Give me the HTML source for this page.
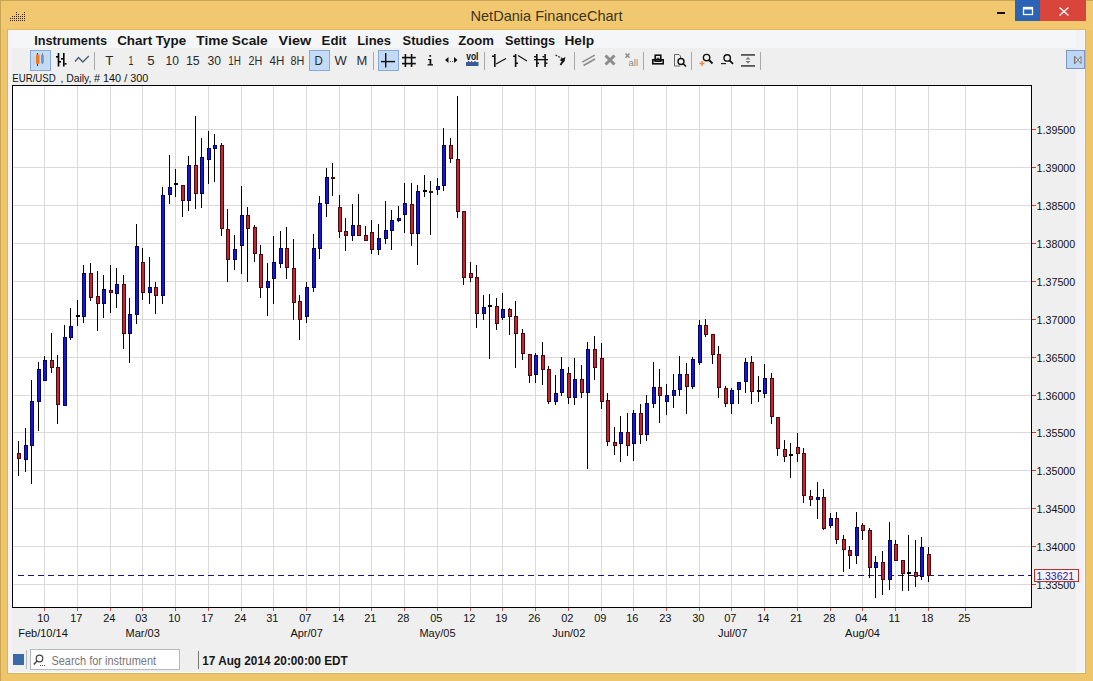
<!DOCTYPE html>
<html><head><meta charset="utf-8"><style>
html,body{margin:0;padding:0}
body{width:1093px;height:681px;overflow:hidden;position:relative;background:#efc56b;font-family:"Liberation Sans",sans-serif}
.a{position:absolute}
.menu span{position:absolute;top:3px;font-weight:bold;font-size:13px;color:#111}
.tb{position:absolute;top:0;font-size:13px;color:#222}
.pl{font-family:"Liberation Sans",sans-serif;font-size:11px;fill:#111}
.dl{font-family:"Liberation Sans",sans-serif;font-size:11px;fill:#111}
</style></head><body>
<div class="a" style="left:0;top:0;width:1093px;height:30px;background:#f1c86f"></div>
<div class="a" style="left:0;top:0;width:1px;height:681px;background:#c9a452"></div>
<div class="a" style="left:0;top:0;width:1093px;height:1px;background:#c9a452"></div>
<div class="a" style="left:8px;top:30px;width:1077px;height:643px;background:#efefef"></div>
<div class="a" style="left:8px;top:30px;width:1077px;height:18px;background:#f5f6f8"></div>
<svg class="a" style="left:0;top:0" width="1093" height="681">
<rect x="7" y="29" width="1" height="644" fill="#d9b35a"/>
<rect x="1085" y="29" width="1" height="644" fill="#d9b35a"/>
<rect x="7" y="673" width="1079" height="1" fill="#d9b35a"/>
<rect x="8" y="30" width="4" height="643" fill="#f5f3f7"/>
<rect x="1076" y="30" width="9" height="643" fill="#f3f2f6"/>
<rect x="1084" y="30" width="1" height="643" fill="#fbfbfb"/>
<rect x="8" y="672" width="1077" height="1" fill="#fafafa"/>
<rect x="12" y="85" width="1020" height="523" fill="#ffffff"/>
<rect x="13" y="129" width="1018" height="1" fill="#dadada"/>
<rect x="13" y="167" width="1018" height="1" fill="#dadada"/>
<rect x="13" y="205" width="1018" height="1" fill="#dadada"/>
<rect x="13" y="243" width="1018" height="1" fill="#dadada"/>
<rect x="13" y="281" width="1018" height="1" fill="#dadada"/>
<rect x="13" y="319" width="1018" height="1" fill="#dadada"/>
<rect x="13" y="357" width="1018" height="1" fill="#dadada"/>
<rect x="13" y="395" width="1018" height="1" fill="#dadada"/>
<rect x="13" y="432" width="1018" height="1" fill="#dadada"/>
<rect x="13" y="470" width="1018" height="1" fill="#dadada"/>
<rect x="13" y="508" width="1018" height="1" fill="#dadada"/>
<rect x="13" y="546" width="1018" height="1" fill="#dadada"/>
<rect x="13" y="584" width="1018" height="1" fill="#dadada"/>
<rect x="44" y="86" width="1" height="521" fill="#dadada"/>
<rect x="77" y="86" width="1" height="521" fill="#dadada"/>
<rect x="110" y="86" width="1" height="521" fill="#dadada"/>
<rect x="142" y="86" width="1" height="521" fill="#dadada"/>
<rect x="175" y="86" width="1" height="521" fill="#dadada"/>
<rect x="208" y="86" width="1" height="521" fill="#dadada"/>
<rect x="241" y="86" width="1" height="521" fill="#dadada"/>
<rect x="273" y="86" width="1" height="521" fill="#dadada"/>
<rect x="306" y="86" width="1" height="521" fill="#dadada"/>
<rect x="339" y="86" width="1" height="521" fill="#dadada"/>
<rect x="371" y="86" width="1" height="521" fill="#dadada"/>
<rect x="404" y="86" width="1" height="521" fill="#dadada"/>
<rect x="437" y="86" width="1" height="521" fill="#dadada"/>
<rect x="470" y="86" width="1" height="521" fill="#dadada"/>
<rect x="502" y="86" width="1" height="521" fill="#dadada"/>
<rect x="535" y="86" width="1" height="521" fill="#dadada"/>
<rect x="568" y="86" width="1" height="521" fill="#dadada"/>
<rect x="601" y="86" width="1" height="521" fill="#dadada"/>
<rect x="633" y="86" width="1" height="521" fill="#dadada"/>
<rect x="666" y="86" width="1" height="521" fill="#dadada"/>
<rect x="699" y="86" width="1" height="521" fill="#dadada"/>
<rect x="731" y="86" width="1" height="521" fill="#dadada"/>
<rect x="764" y="86" width="1" height="521" fill="#dadada"/>
<rect x="797" y="86" width="1" height="521" fill="#dadada"/>
<rect x="830" y="86" width="1" height="521" fill="#dadada"/>
<rect x="862" y="86" width="1" height="521" fill="#dadada"/>
<rect x="895" y="86" width="1" height="521" fill="#dadada"/>
<rect x="928" y="86" width="1" height="521" fill="#dadada"/>
<rect x="965" y="86" width="1" height="521" fill="#dadada"/>
<line x1="18" y1="575.5" x2="1031" y2="575.5" stroke="#16167c" stroke-width="1" stroke-dasharray="6 4" shape-rendering="crispEdges"/>
<rect x="18" y="441" width="1" height="35" fill="#000"/>
<rect x="17" y="453" width="4" height="6" fill="#4a0a0e"/>
<rect x="18" y="454" width="2" height="4" fill="#bd2834"/>
<rect x="25" y="428" width="1" height="44" fill="#000"/>
<rect x="24" y="445" width="4" height="15" fill="#04045a"/>
<rect x="25" y="446" width="2" height="13" fill="#1616d4"/>
<rect x="31" y="380" width="1" height="104" fill="#000"/>
<rect x="30" y="401" width="4" height="45" fill="#04045a"/>
<rect x="31" y="402" width="2" height="43" fill="#1616d4"/>
<rect x="38" y="362" width="1" height="69" fill="#000"/>
<rect x="37" y="369" width="4" height="33" fill="#04045a"/>
<rect x="38" y="370" width="2" height="31" fill="#1616d4"/>
<rect x="44" y="356" width="1" height="25" fill="#000"/>
<rect x="43" y="360" width="4" height="21" fill="#04045a"/>
<rect x="44" y="361" width="2" height="19" fill="#1616d4"/>
<rect x="51" y="333" width="1" height="40" fill="#000"/>
<rect x="50" y="360" width="4" height="8" fill="#4a0a0e"/>
<rect x="51" y="361" width="2" height="6" fill="#bd2834"/>
<rect x="57" y="355" width="1" height="69" fill="#000"/>
<rect x="56" y="367" width="4" height="38" fill="#4a0a0e"/>
<rect x="57" y="368" width="2" height="36" fill="#bd2834"/>
<rect x="64" y="325" width="1" height="81" fill="#000"/>
<rect x="63" y="337" width="4" height="69" fill="#04045a"/>
<rect x="64" y="338" width="2" height="67" fill="#1616d4"/>
<rect x="70" y="308" width="1" height="32" fill="#000"/>
<rect x="69" y="326" width="4" height="12" fill="#04045a"/>
<rect x="70" y="327" width="2" height="10" fill="#1616d4"/>
<rect x="77" y="300" width="1" height="26" fill="#000"/>
<rect x="76" y="315" width="4" height="2" fill="#000"/>
<rect x="83" y="265" width="1" height="58" fill="#000"/>
<rect x="82" y="273" width="4" height="44" fill="#04045a"/>
<rect x="83" y="274" width="2" height="42" fill="#1616d4"/>
<rect x="90" y="263" width="1" height="38" fill="#000"/>
<rect x="89" y="273" width="4" height="25" fill="#4a0a0e"/>
<rect x="90" y="274" width="2" height="23" fill="#bd2834"/>
<rect x="97" y="271" width="1" height="60" fill="#000"/>
<rect x="96" y="296" width="4" height="8" fill="#4a0a0e"/>
<rect x="97" y="297" width="2" height="6" fill="#bd2834"/>
<rect x="103" y="275" width="1" height="43" fill="#000"/>
<rect x="102" y="289" width="4" height="15" fill="#04045a"/>
<rect x="103" y="290" width="2" height="13" fill="#1616d4"/>
<rect x="110" y="265" width="1" height="48" fill="#000"/>
<rect x="109" y="290" width="4" height="3" fill="#4a0a0e"/>
<rect x="110" y="291" width="2" height="1" fill="#bd2834"/>
<rect x="116" y="268" width="1" height="40" fill="#000"/>
<rect x="115" y="284" width="4" height="10" fill="#04045a"/>
<rect x="116" y="285" width="2" height="8" fill="#1616d4"/>
<rect x="123" y="275" width="1" height="74" fill="#000"/>
<rect x="122" y="284" width="4" height="50" fill="#4a0a0e"/>
<rect x="123" y="285" width="2" height="48" fill="#bd2834"/>
<rect x="129" y="298" width="1" height="65" fill="#000"/>
<rect x="128" y="314" width="4" height="20" fill="#04045a"/>
<rect x="129" y="315" width="2" height="18" fill="#1616d4"/>
<rect x="136" y="224" width="1" height="100" fill="#000"/>
<rect x="135" y="246" width="4" height="69" fill="#04045a"/>
<rect x="136" y="247" width="2" height="67" fill="#1616d4"/>
<rect x="142" y="248" width="1" height="52" fill="#000"/>
<rect x="141" y="262" width="4" height="31" fill="#4a0a0e"/>
<rect x="142" y="263" width="2" height="29" fill="#bd2834"/>
<rect x="149" y="257" width="1" height="47" fill="#000"/>
<rect x="148" y="287" width="4" height="6" fill="#04045a"/>
<rect x="149" y="288" width="2" height="4" fill="#1616d4"/>
<rect x="155" y="282" width="1" height="32" fill="#000"/>
<rect x="154" y="287" width="4" height="9" fill="#4a0a0e"/>
<rect x="155" y="288" width="2" height="7" fill="#bd2834"/>
<rect x="162" y="187" width="1" height="117" fill="#000"/>
<rect x="161" y="195" width="4" height="101" fill="#04045a"/>
<rect x="162" y="196" width="2" height="99" fill="#1616d4"/>
<rect x="169" y="155" width="1" height="49" fill="#000"/>
<rect x="168" y="187" width="4" height="8" fill="#04045a"/>
<rect x="169" y="188" width="2" height="6" fill="#1616d4"/>
<rect x="175" y="169" width="1" height="28" fill="#000"/>
<rect x="174" y="183" width="4" height="2" fill="#000"/>
<rect x="182" y="185" width="1" height="32" fill="#000"/>
<rect x="181" y="185" width="4" height="16" fill="#4a0a0e"/>
<rect x="182" y="186" width="2" height="14" fill="#bd2834"/>
<rect x="188" y="156" width="1" height="55" fill="#000"/>
<rect x="187" y="165" width="4" height="36" fill="#04045a"/>
<rect x="188" y="166" width="2" height="34" fill="#1616d4"/>
<rect x="195" y="116" width="1" height="93" fill="#000"/>
<rect x="194" y="165" width="4" height="29" fill="#4a0a0e"/>
<rect x="195" y="166" width="2" height="27" fill="#bd2834"/>
<rect x="201" y="138" width="1" height="70" fill="#000"/>
<rect x="200" y="157" width="4" height="37" fill="#04045a"/>
<rect x="201" y="158" width="2" height="35" fill="#1616d4"/>
<rect x="208" y="131" width="1" height="53" fill="#000"/>
<rect x="207" y="148" width="4" height="12" fill="#04045a"/>
<rect x="208" y="149" width="2" height="10" fill="#1616d4"/>
<rect x="214" y="134" width="1" height="48" fill="#000"/>
<rect x="213" y="145" width="4" height="4" fill="#04045a"/>
<rect x="214" y="146" width="2" height="2" fill="#1616d4"/>
<rect x="221" y="143" width="1" height="93" fill="#000"/>
<rect x="220" y="145" width="4" height="84" fill="#4a0a0e"/>
<rect x="221" y="146" width="2" height="82" fill="#bd2834"/>
<rect x="227" y="209" width="1" height="73" fill="#000"/>
<rect x="226" y="229" width="4" height="31" fill="#4a0a0e"/>
<rect x="227" y="230" width="2" height="29" fill="#bd2834"/>
<rect x="234" y="235" width="1" height="35" fill="#000"/>
<rect x="233" y="249" width="4" height="11" fill="#04045a"/>
<rect x="234" y="250" width="2" height="9" fill="#1616d4"/>
<rect x="241" y="186" width="1" height="88" fill="#000"/>
<rect x="240" y="215" width="4" height="31" fill="#04045a"/>
<rect x="241" y="216" width="2" height="29" fill="#1616d4"/>
<rect x="247" y="207" width="1" height="75" fill="#000"/>
<rect x="246" y="215" width="4" height="14" fill="#4a0a0e"/>
<rect x="247" y="216" width="2" height="12" fill="#bd2834"/>
<rect x="254" y="225" width="1" height="37" fill="#000"/>
<rect x="253" y="227" width="4" height="27" fill="#4a0a0e"/>
<rect x="254" y="228" width="2" height="25" fill="#bd2834"/>
<rect x="260" y="245" width="1" height="53" fill="#000"/>
<rect x="259" y="254" width="4" height="34" fill="#4a0a0e"/>
<rect x="260" y="255" width="2" height="32" fill="#bd2834"/>
<rect x="267" y="263" width="1" height="53" fill="#000"/>
<rect x="266" y="281" width="4" height="7" fill="#04045a"/>
<rect x="267" y="282" width="2" height="5" fill="#1616d4"/>
<rect x="273" y="236" width="1" height="68" fill="#000"/>
<rect x="272" y="262" width="4" height="17" fill="#04045a"/>
<rect x="273" y="263" width="2" height="15" fill="#1616d4"/>
<rect x="280" y="231" width="1" height="37" fill="#000"/>
<rect x="279" y="248" width="4" height="16" fill="#04045a"/>
<rect x="280" y="249" width="2" height="14" fill="#1616d4"/>
<rect x="286" y="227" width="1" height="52" fill="#000"/>
<rect x="285" y="248" width="4" height="20" fill="#4a0a0e"/>
<rect x="286" y="249" width="2" height="18" fill="#bd2834"/>
<rect x="293" y="239" width="1" height="81" fill="#000"/>
<rect x="292" y="268" width="4" height="35" fill="#4a0a0e"/>
<rect x="293" y="269" width="2" height="33" fill="#bd2834"/>
<rect x="299" y="295" width="1" height="45" fill="#000"/>
<rect x="298" y="301" width="4" height="19" fill="#4a0a0e"/>
<rect x="299" y="302" width="2" height="17" fill="#bd2834"/>
<rect x="306" y="282" width="1" height="41" fill="#000"/>
<rect x="305" y="287" width="4" height="30" fill="#04045a"/>
<rect x="306" y="288" width="2" height="28" fill="#1616d4"/>
<rect x="313" y="234" width="1" height="58" fill="#000"/>
<rect x="312" y="248" width="4" height="40" fill="#04045a"/>
<rect x="313" y="249" width="2" height="38" fill="#1616d4"/>
<rect x="319" y="196" width="1" height="63" fill="#000"/>
<rect x="318" y="203" width="4" height="46" fill="#04045a"/>
<rect x="319" y="204" width="2" height="44" fill="#1616d4"/>
<rect x="326" y="168" width="1" height="49" fill="#000"/>
<rect x="325" y="177" width="4" height="27" fill="#04045a"/>
<rect x="326" y="178" width="2" height="25" fill="#1616d4"/>
<rect x="332" y="163" width="1" height="33" fill="#000"/>
<rect x="331" y="177" width="4" height="2" fill="#4a0a0e"/>
<rect x="339" y="195" width="1" height="43" fill="#000"/>
<rect x="338" y="207" width="4" height="25" fill="#4a0a0e"/>
<rect x="339" y="208" width="2" height="23" fill="#bd2834"/>
<rect x="345" y="218" width="1" height="33" fill="#000"/>
<rect x="344" y="231" width="4" height="5" fill="#4a0a0e"/>
<rect x="345" y="232" width="2" height="3" fill="#bd2834"/>
<rect x="352" y="204" width="1" height="37" fill="#000"/>
<rect x="351" y="225" width="4" height="11" fill="#04045a"/>
<rect x="352" y="226" width="2" height="9" fill="#1616d4"/>
<rect x="358" y="194" width="1" height="42" fill="#000"/>
<rect x="357" y="225" width="4" height="11" fill="#4a0a0e"/>
<rect x="358" y="226" width="2" height="9" fill="#bd2834"/>
<rect x="365" y="226" width="1" height="15" fill="#000"/>
<rect x="364" y="235" width="4" height="6" fill="#4a0a0e"/>
<rect x="365" y="236" width="2" height="4" fill="#bd2834"/>
<rect x="371" y="220" width="1" height="34" fill="#000"/>
<rect x="370" y="232" width="4" height="18" fill="#4a0a0e"/>
<rect x="371" y="233" width="2" height="16" fill="#bd2834"/>
<rect x="378" y="224" width="1" height="31" fill="#000"/>
<rect x="377" y="238" width="4" height="12" fill="#04045a"/>
<rect x="378" y="239" width="2" height="10" fill="#1616d4"/>
<rect x="385" y="201" width="1" height="43" fill="#000"/>
<rect x="384" y="230" width="4" height="9" fill="#04045a"/>
<rect x="385" y="231" width="2" height="7" fill="#1616d4"/>
<rect x="391" y="210" width="1" height="40" fill="#000"/>
<rect x="390" y="220" width="4" height="11" fill="#04045a"/>
<rect x="391" y="221" width="2" height="9" fill="#1616d4"/>
<rect x="398" y="206" width="1" height="16" fill="#000"/>
<rect x="397" y="218" width="4" height="3" fill="#04045a"/>
<rect x="398" y="219" width="2" height="1" fill="#1616d4"/>
<rect x="404" y="183" width="1" height="50" fill="#000"/>
<rect x="403" y="203" width="4" height="12" fill="#04045a"/>
<rect x="404" y="204" width="2" height="10" fill="#1616d4"/>
<rect x="411" y="183" width="1" height="63" fill="#000"/>
<rect x="410" y="204" width="4" height="30" fill="#4a0a0e"/>
<rect x="411" y="205" width="2" height="28" fill="#bd2834"/>
<rect x="417" y="185" width="1" height="80" fill="#000"/>
<rect x="416" y="191" width="4" height="43" fill="#04045a"/>
<rect x="417" y="192" width="2" height="41" fill="#1616d4"/>
<rect x="424" y="175" width="1" height="22" fill="#000"/>
<rect x="423" y="190" width="4" height="2" fill="#000"/>
<rect x="430" y="181" width="1" height="54" fill="#000"/>
<rect x="429" y="191" width="4" height="2" fill="#4a0a0e"/>
<rect x="437" y="178" width="1" height="17" fill="#000"/>
<rect x="436" y="186" width="4" height="4" fill="#04045a"/>
<rect x="437" y="187" width="2" height="2" fill="#1616d4"/>
<rect x="443" y="128" width="1" height="63" fill="#000"/>
<rect x="442" y="145" width="4" height="41" fill="#04045a"/>
<rect x="443" y="146" width="2" height="39" fill="#1616d4"/>
<rect x="450" y="138" width="1" height="25" fill="#000"/>
<rect x="449" y="145" width="4" height="14" fill="#4a0a0e"/>
<rect x="450" y="146" width="2" height="12" fill="#bd2834"/>
<rect x="457" y="96" width="1" height="122" fill="#000"/>
<rect x="456" y="159" width="4" height="53" fill="#4a0a0e"/>
<rect x="457" y="160" width="2" height="51" fill="#bd2834"/>
<rect x="463" y="211" width="1" height="74" fill="#000"/>
<rect x="462" y="211" width="4" height="67" fill="#4a0a0e"/>
<rect x="463" y="212" width="2" height="65" fill="#bd2834"/>
<rect x="470" y="262" width="1" height="20" fill="#000"/>
<rect x="469" y="273" width="4" height="5" fill="#4a0a0e"/>
<rect x="470" y="274" width="2" height="3" fill="#bd2834"/>
<rect x="476" y="265" width="1" height="63" fill="#000"/>
<rect x="475" y="277" width="4" height="37" fill="#4a0a0e"/>
<rect x="476" y="278" width="2" height="35" fill="#bd2834"/>
<rect x="483" y="295" width="1" height="25" fill="#000"/>
<rect x="482" y="307" width="4" height="7" fill="#04045a"/>
<rect x="483" y="308" width="2" height="5" fill="#1616d4"/>
<rect x="489" y="294" width="1" height="65" fill="#000"/>
<rect x="488" y="305" width="4" height="2" fill="#000"/>
<rect x="496" y="298" width="1" height="32" fill="#000"/>
<rect x="495" y="306" width="4" height="18" fill="#4a0a0e"/>
<rect x="496" y="307" width="2" height="16" fill="#bd2834"/>
<rect x="502" y="293" width="1" height="27" fill="#000"/>
<rect x="501" y="309" width="4" height="9" fill="#04045a"/>
<rect x="502" y="310" width="2" height="7" fill="#1616d4"/>
<rect x="509" y="308" width="1" height="27" fill="#000"/>
<rect x="508" y="309" width="4" height="8" fill="#4a0a0e"/>
<rect x="509" y="310" width="2" height="6" fill="#bd2834"/>
<rect x="515" y="301" width="1" height="67" fill="#000"/>
<rect x="514" y="316" width="4" height="18" fill="#4a0a0e"/>
<rect x="515" y="317" width="2" height="16" fill="#bd2834"/>
<rect x="522" y="329" width="1" height="31" fill="#000"/>
<rect x="521" y="333" width="4" height="21" fill="#4a0a0e"/>
<rect x="522" y="334" width="2" height="19" fill="#bd2834"/>
<rect x="529" y="354" width="1" height="29" fill="#000"/>
<rect x="528" y="354" width="4" height="22" fill="#4a0a0e"/>
<rect x="529" y="355" width="2" height="20" fill="#bd2834"/>
<rect x="535" y="353" width="1" height="30" fill="#000"/>
<rect x="534" y="355" width="4" height="20" fill="#04045a"/>
<rect x="535" y="356" width="2" height="18" fill="#1616d4"/>
<rect x="542" y="342" width="1" height="43" fill="#000"/>
<rect x="541" y="355" width="4" height="15" fill="#4a0a0e"/>
<rect x="542" y="356" width="2" height="13" fill="#bd2834"/>
<rect x="548" y="366" width="1" height="38" fill="#000"/>
<rect x="547" y="369" width="4" height="33" fill="#4a0a0e"/>
<rect x="548" y="370" width="2" height="31" fill="#bd2834"/>
<rect x="555" y="375" width="1" height="30" fill="#000"/>
<rect x="554" y="393" width="4" height="9" fill="#04045a"/>
<rect x="555" y="394" width="2" height="7" fill="#1616d4"/>
<rect x="561" y="357" width="1" height="39" fill="#000"/>
<rect x="560" y="369" width="4" height="24" fill="#04045a"/>
<rect x="561" y="370" width="2" height="22" fill="#1616d4"/>
<rect x="568" y="367" width="1" height="37" fill="#000"/>
<rect x="567" y="373" width="4" height="25" fill="#4a0a0e"/>
<rect x="568" y="374" width="2" height="23" fill="#bd2834"/>
<rect x="574" y="358" width="1" height="47" fill="#000"/>
<rect x="573" y="379" width="4" height="19" fill="#04045a"/>
<rect x="574" y="380" width="2" height="17" fill="#1616d4"/>
<rect x="581" y="365" width="1" height="33" fill="#000"/>
<rect x="580" y="379" width="4" height="14" fill="#4a0a0e"/>
<rect x="581" y="380" width="2" height="12" fill="#bd2834"/>
<rect x="587" y="342" width="1" height="127" fill="#000"/>
<rect x="586" y="349" width="4" height="44" fill="#04045a"/>
<rect x="587" y="350" width="2" height="42" fill="#1616d4"/>
<rect x="594" y="336" width="1" height="44" fill="#000"/>
<rect x="593" y="349" width="4" height="19" fill="#4a0a0e"/>
<rect x="594" y="350" width="2" height="17" fill="#bd2834"/>
<rect x="601" y="343" width="1" height="66" fill="#000"/>
<rect x="600" y="358" width="4" height="44" fill="#4a0a0e"/>
<rect x="601" y="359" width="2" height="42" fill="#bd2834"/>
<rect x="607" y="393" width="1" height="53" fill="#000"/>
<rect x="606" y="400" width="4" height="42" fill="#4a0a0e"/>
<rect x="607" y="401" width="2" height="40" fill="#bd2834"/>
<rect x="614" y="427" width="1" height="28" fill="#000"/>
<rect x="613" y="442" width="4" height="4" fill="#4a0a0e"/>
<rect x="614" y="443" width="2" height="2" fill="#bd2834"/>
<rect x="620" y="416" width="1" height="46" fill="#000"/>
<rect x="619" y="432" width="4" height="12" fill="#04045a"/>
<rect x="620" y="433" width="2" height="10" fill="#1616d4"/>
<rect x="627" y="413" width="1" height="43" fill="#000"/>
<rect x="626" y="432" width="4" height="14" fill="#4a0a0e"/>
<rect x="627" y="433" width="2" height="12" fill="#bd2834"/>
<rect x="633" y="410" width="1" height="51" fill="#000"/>
<rect x="632" y="413" width="4" height="31" fill="#04045a"/>
<rect x="633" y="414" width="2" height="29" fill="#1616d4"/>
<rect x="640" y="404" width="1" height="40" fill="#000"/>
<rect x="639" y="413" width="4" height="22" fill="#4a0a0e"/>
<rect x="640" y="414" width="2" height="20" fill="#bd2834"/>
<rect x="646" y="395" width="1" height="46" fill="#000"/>
<rect x="645" y="403" width="4" height="32" fill="#04045a"/>
<rect x="646" y="404" width="2" height="30" fill="#1616d4"/>
<rect x="653" y="362" width="1" height="46" fill="#000"/>
<rect x="652" y="387" width="4" height="17" fill="#04045a"/>
<rect x="653" y="388" width="2" height="15" fill="#1616d4"/>
<rect x="659" y="369" width="1" height="54" fill="#000"/>
<rect x="658" y="387" width="4" height="9" fill="#4a0a0e"/>
<rect x="659" y="388" width="2" height="7" fill="#bd2834"/>
<rect x="666" y="384" width="1" height="31" fill="#000"/>
<rect x="665" y="395" width="4" height="7" fill="#04045a"/>
<rect x="666" y="396" width="2" height="5" fill="#1616d4"/>
<rect x="673" y="374" width="1" height="34" fill="#000"/>
<rect x="672" y="390" width="4" height="6" fill="#04045a"/>
<rect x="673" y="391" width="2" height="4" fill="#1616d4"/>
<rect x="679" y="356" width="1" height="40" fill="#000"/>
<rect x="678" y="374" width="4" height="16" fill="#04045a"/>
<rect x="679" y="375" width="2" height="14" fill="#1616d4"/>
<rect x="686" y="363" width="1" height="51" fill="#000"/>
<rect x="685" y="374" width="4" height="13" fill="#4a0a0e"/>
<rect x="686" y="375" width="2" height="11" fill="#bd2834"/>
<rect x="692" y="357" width="1" height="32" fill="#000"/>
<rect x="691" y="359" width="4" height="28" fill="#04045a"/>
<rect x="692" y="360" width="2" height="26" fill="#1616d4"/>
<rect x="699" y="320" width="1" height="45" fill="#000"/>
<rect x="698" y="325" width="4" height="38" fill="#04045a"/>
<rect x="699" y="326" width="2" height="36" fill="#1616d4"/>
<rect x="705" y="319" width="1" height="18" fill="#000"/>
<rect x="704" y="325" width="4" height="10" fill="#4a0a0e"/>
<rect x="705" y="326" width="2" height="8" fill="#bd2834"/>
<rect x="712" y="334" width="1" height="30" fill="#000"/>
<rect x="711" y="334" width="4" height="21" fill="#4a0a0e"/>
<rect x="712" y="335" width="2" height="19" fill="#bd2834"/>
<rect x="718" y="346" width="1" height="52" fill="#000"/>
<rect x="717" y="354" width="4" height="34" fill="#4a0a0e"/>
<rect x="718" y="355" width="2" height="32" fill="#bd2834"/>
<rect x="725" y="386" width="1" height="21" fill="#000"/>
<rect x="724" y="388" width="4" height="16" fill="#4a0a0e"/>
<rect x="725" y="389" width="2" height="14" fill="#bd2834"/>
<rect x="731" y="388" width="1" height="26" fill="#000"/>
<rect x="730" y="390" width="4" height="14" fill="#04045a"/>
<rect x="731" y="391" width="2" height="12" fill="#1616d4"/>
<rect x="738" y="382" width="1" height="22" fill="#000"/>
<rect x="737" y="382" width="4" height="8" fill="#04045a"/>
<rect x="738" y="383" width="2" height="6" fill="#1616d4"/>
<rect x="745" y="358" width="1" height="35" fill="#000"/>
<rect x="744" y="362" width="4" height="20" fill="#04045a"/>
<rect x="745" y="363" width="2" height="18" fill="#1616d4"/>
<rect x="751" y="356" width="1" height="48" fill="#000"/>
<rect x="750" y="362" width="4" height="30" fill="#4a0a0e"/>
<rect x="751" y="363" width="2" height="28" fill="#bd2834"/>
<rect x="758" y="376" width="1" height="26" fill="#000"/>
<rect x="757" y="390" width="4" height="2" fill="#000"/>
<rect x="764" y="364" width="1" height="34" fill="#000"/>
<rect x="763" y="378" width="4" height="16" fill="#04045a"/>
<rect x="764" y="379" width="2" height="14" fill="#1616d4"/>
<rect x="771" y="373" width="1" height="51" fill="#000"/>
<rect x="770" y="378" width="4" height="39" fill="#4a0a0e"/>
<rect x="771" y="379" width="2" height="37" fill="#bd2834"/>
<rect x="777" y="417" width="1" height="39" fill="#000"/>
<rect x="776" y="417" width="4" height="32" fill="#4a0a0e"/>
<rect x="777" y="418" width="2" height="30" fill="#bd2834"/>
<rect x="784" y="440" width="1" height="22" fill="#000"/>
<rect x="783" y="449" width="4" height="8" fill="#4a0a0e"/>
<rect x="784" y="450" width="2" height="6" fill="#bd2834"/>
<rect x="790" y="443" width="1" height="35" fill="#000"/>
<rect x="789" y="454" width="4" height="2" fill="#000"/>
<rect x="797" y="433" width="1" height="29" fill="#000"/>
<rect x="796" y="447" width="4" height="7" fill="#4a0a0e"/>
<rect x="797" y="448" width="2" height="5" fill="#bd2834"/>
<rect x="803" y="448" width="1" height="55" fill="#000"/>
<rect x="802" y="453" width="4" height="43" fill="#4a0a0e"/>
<rect x="803" y="454" width="2" height="41" fill="#bd2834"/>
<rect x="810" y="490" width="1" height="16" fill="#000"/>
<rect x="809" y="496" width="4" height="4" fill="#4a0a0e"/>
<rect x="810" y="497" width="2" height="2" fill="#bd2834"/>
<rect x="817" y="482" width="1" height="37" fill="#000"/>
<rect x="816" y="497" width="4" height="3" fill="#04045a"/>
<rect x="817" y="498" width="2" height="1" fill="#1616d4"/>
<rect x="823" y="489" width="1" height="41" fill="#000"/>
<rect x="822" y="497" width="4" height="32" fill="#4a0a0e"/>
<rect x="823" y="498" width="2" height="30" fill="#bd2834"/>
<rect x="830" y="513" width="1" height="15" fill="#000"/>
<rect x="829" y="518" width="4" height="8" fill="#04045a"/>
<rect x="830" y="519" width="2" height="6" fill="#1616d4"/>
<rect x="836" y="512" width="1" height="32" fill="#000"/>
<rect x="835" y="518" width="4" height="22" fill="#4a0a0e"/>
<rect x="836" y="519" width="2" height="20" fill="#bd2834"/>
<rect x="843" y="535" width="1" height="37" fill="#000"/>
<rect x="842" y="539" width="4" height="11" fill="#4a0a0e"/>
<rect x="843" y="540" width="2" height="9" fill="#bd2834"/>
<rect x="849" y="546" width="1" height="23" fill="#000"/>
<rect x="848" y="550" width="4" height="6" fill="#4a0a0e"/>
<rect x="849" y="551" width="2" height="4" fill="#bd2834"/>
<rect x="856" y="512" width="1" height="52" fill="#000"/>
<rect x="855" y="527" width="4" height="29" fill="#04045a"/>
<rect x="856" y="528" width="2" height="27" fill="#1616d4"/>
<rect x="862" y="523" width="1" height="17" fill="#000"/>
<rect x="861" y="525" width="4" height="6" fill="#4a0a0e"/>
<rect x="862" y="526" width="2" height="4" fill="#bd2834"/>
<rect x="869" y="528" width="1" height="50" fill="#000"/>
<rect x="868" y="530" width="4" height="38" fill="#4a0a0e"/>
<rect x="869" y="531" width="2" height="36" fill="#bd2834"/>
<rect x="875" y="556" width="1" height="42" fill="#000"/>
<rect x="874" y="562" width="4" height="6" fill="#04045a"/>
<rect x="875" y="563" width="2" height="4" fill="#1616d4"/>
<rect x="882" y="551" width="1" height="44" fill="#000"/>
<rect x="881" y="562" width="4" height="18" fill="#4a0a0e"/>
<rect x="882" y="563" width="2" height="16" fill="#bd2834"/>
<rect x="889" y="522" width="1" height="68" fill="#000"/>
<rect x="888" y="540" width="4" height="40" fill="#04045a"/>
<rect x="889" y="541" width="2" height="38" fill="#1616d4"/>
<rect x="895" y="540" width="1" height="21" fill="#000"/>
<rect x="894" y="544" width="4" height="17" fill="#4a0a0e"/>
<rect x="895" y="545" width="2" height="15" fill="#bd2834"/>
<rect x="902" y="560" width="1" height="31" fill="#000"/>
<rect x="901" y="560" width="4" height="14" fill="#4a0a0e"/>
<rect x="902" y="561" width="2" height="12" fill="#bd2834"/>
<rect x="908" y="535" width="1" height="56" fill="#000"/>
<rect x="907" y="572" width="4" height="2" fill="#000"/>
<rect x="915" y="540" width="1" height="47" fill="#000"/>
<rect x="914" y="572" width="4" height="5" fill="#4a0a0e"/>
<rect x="915" y="573" width="2" height="3" fill="#bd2834"/>
<rect x="921" y="537" width="1" height="43" fill="#000"/>
<rect x="920" y="547" width="4" height="30" fill="#04045a"/>
<rect x="921" y="548" width="2" height="28" fill="#1616d4"/>
<rect x="928" y="547" width="1" height="35" fill="#000"/>
<rect x="927" y="554" width="4" height="22" fill="#4a0a0e"/>
<rect x="928" y="555" width="2" height="20" fill="#bd2834"/>
<rect x="12.5" y="85.5" width="1019" height="522" fill="none" stroke="#000" stroke-width="1"/>
<rect x="1032" y="129" width="4" height="1" fill="#c83c3c"/>
<text x="1036.6" y="133.6" class="pl" textLength="38.6" lengthAdjust="spacingAndGlyphs">1.39500</text>
<rect x="1032" y="167" width="4" height="1" fill="#c83c3c"/>
<text x="1036.6" y="171.6" class="pl" textLength="38.6" lengthAdjust="spacingAndGlyphs">1.39000</text>
<rect x="1032" y="205" width="4" height="1" fill="#c83c3c"/>
<text x="1036.6" y="209.6" class="pl" textLength="38.6" lengthAdjust="spacingAndGlyphs">1.38500</text>
<rect x="1032" y="243" width="4" height="1" fill="#c83c3c"/>
<text x="1036.6" y="247.6" class="pl" textLength="38.6" lengthAdjust="spacingAndGlyphs">1.38000</text>
<rect x="1032" y="281" width="4" height="1" fill="#c83c3c"/>
<text x="1036.6" y="285.6" class="pl" textLength="38.6" lengthAdjust="spacingAndGlyphs">1.37500</text>
<rect x="1032" y="319" width="4" height="1" fill="#c83c3c"/>
<text x="1036.6" y="323.6" class="pl" textLength="38.6" lengthAdjust="spacingAndGlyphs">1.37000</text>
<rect x="1032" y="357" width="4" height="1" fill="#c83c3c"/>
<text x="1036.6" y="361.6" class="pl" textLength="38.6" lengthAdjust="spacingAndGlyphs">1.36500</text>
<rect x="1032" y="395" width="4" height="1" fill="#c83c3c"/>
<text x="1036.6" y="399.6" class="pl" textLength="38.6" lengthAdjust="spacingAndGlyphs">1.36000</text>
<rect x="1032" y="432" width="4" height="1" fill="#c83c3c"/>
<text x="1036.6" y="436.6" class="pl" textLength="38.6" lengthAdjust="spacingAndGlyphs">1.35500</text>
<rect x="1032" y="470" width="4" height="1" fill="#c83c3c"/>
<text x="1036.6" y="474.6" class="pl" textLength="38.6" lengthAdjust="spacingAndGlyphs">1.35000</text>
<rect x="1032" y="508" width="4" height="1" fill="#c83c3c"/>
<text x="1036.6" y="512.6" class="pl" textLength="38.6" lengthAdjust="spacingAndGlyphs">1.34500</text>
<rect x="1032" y="546" width="4" height="1" fill="#c83c3c"/>
<text x="1036.6" y="550.6" class="pl" textLength="38.6" lengthAdjust="spacingAndGlyphs">1.34000</text>
<rect x="1032" y="584" width="4" height="1" fill="#c83c3c"/>
<text x="1036.6" y="588.6" class="pl" textLength="38.6" lengthAdjust="spacingAndGlyphs">1.33500</text>
<rect x="1034.5" y="569.5" width="44" height="12" fill="#f6f2f4" stroke="#b83030" stroke-width="1"/>
<text x="1036.4" y="579.8" class="pl" style="fill:#1e1e9a" textLength="37.6" lengthAdjust="spacingAndGlyphs">1.33621</text>
<rect x="44" y="608" width="1" height="3" fill="#d05050"/>
<text x="43.3" y="621.8" class="dl" text-anchor="middle">10</text>
<rect x="77" y="608" width="1" height="3" fill="#d05050"/>
<text x="76.3" y="621.8" class="dl" text-anchor="middle">17</text>
<rect x="110" y="608" width="1" height="3" fill="#d05050"/>
<text x="109.3" y="621.8" class="dl" text-anchor="middle">24</text>
<rect x="142" y="608" width="1" height="3" fill="#d05050"/>
<text x="141.3" y="621.8" class="dl" text-anchor="middle">03</text>
<rect x="175" y="608" width="1" height="3" fill="#d05050"/>
<text x="174.3" y="621.8" class="dl" text-anchor="middle">10</text>
<rect x="208" y="608" width="1" height="3" fill="#d05050"/>
<text x="207.3" y="621.8" class="dl" text-anchor="middle">17</text>
<rect x="241" y="608" width="1" height="3" fill="#d05050"/>
<text x="240.3" y="621.8" class="dl" text-anchor="middle">24</text>
<rect x="273" y="608" width="1" height="3" fill="#d05050"/>
<text x="272.3" y="621.8" class="dl" text-anchor="middle">31</text>
<rect x="306" y="608" width="1" height="3" fill="#d05050"/>
<text x="305.3" y="621.8" class="dl" text-anchor="middle">07</text>
<rect x="339" y="608" width="1" height="3" fill="#d05050"/>
<text x="338.3" y="621.8" class="dl" text-anchor="middle">14</text>
<rect x="371" y="608" width="1" height="3" fill="#d05050"/>
<text x="370.3" y="621.8" class="dl" text-anchor="middle">21</text>
<rect x="404" y="608" width="1" height="3" fill="#d05050"/>
<text x="403.3" y="621.8" class="dl" text-anchor="middle">28</text>
<rect x="437" y="608" width="1" height="3" fill="#d05050"/>
<text x="436.3" y="621.8" class="dl" text-anchor="middle">05</text>
<rect x="470" y="608" width="1" height="3" fill="#d05050"/>
<text x="469.3" y="621.8" class="dl" text-anchor="middle">12</text>
<rect x="502" y="608" width="1" height="3" fill="#d05050"/>
<text x="501.3" y="621.8" class="dl" text-anchor="middle">19</text>
<rect x="535" y="608" width="1" height="3" fill="#d05050"/>
<text x="534.3" y="621.8" class="dl" text-anchor="middle">26</text>
<rect x="568" y="608" width="1" height="3" fill="#d05050"/>
<text x="567.3" y="621.8" class="dl" text-anchor="middle">02</text>
<rect x="601" y="608" width="1" height="3" fill="#d05050"/>
<text x="600.3" y="621.8" class="dl" text-anchor="middle">09</text>
<rect x="633" y="608" width="1" height="3" fill="#d05050"/>
<text x="632.3" y="621.8" class="dl" text-anchor="middle">16</text>
<rect x="666" y="608" width="1" height="3" fill="#d05050"/>
<text x="665.3" y="621.8" class="dl" text-anchor="middle">23</text>
<rect x="699" y="608" width="1" height="3" fill="#d05050"/>
<text x="698.3" y="621.8" class="dl" text-anchor="middle">30</text>
<rect x="731" y="608" width="1" height="3" fill="#d05050"/>
<text x="730.3" y="621.8" class="dl" text-anchor="middle">07</text>
<rect x="764" y="608" width="1" height="3" fill="#d05050"/>
<text x="763.3" y="621.8" class="dl" text-anchor="middle">14</text>
<rect x="797" y="608" width="1" height="3" fill="#d05050"/>
<text x="796.3" y="621.8" class="dl" text-anchor="middle">21</text>
<rect x="830" y="608" width="1" height="3" fill="#d05050"/>
<text x="829.3" y="621.8" class="dl" text-anchor="middle">28</text>
<rect x="862" y="608" width="1" height="3" fill="#d05050"/>
<text x="861.3" y="621.8" class="dl" text-anchor="middle">04</text>
<rect x="895" y="608" width="1" height="3" fill="#d05050"/>
<text x="894.3" y="621.8" class="dl" text-anchor="middle">11</text>
<rect x="928" y="608" width="1" height="3" fill="#d05050"/>
<text x="927.3" y="621.8" class="dl" text-anchor="middle">18</text>
<rect x="965" y="608" width="1" height="3" fill="#d05050"/>
<text x="964.3" y="621.8" class="dl" text-anchor="middle">25</text>
<text x="43" y="637" class="dl" text-anchor="middle">Feb/10/14</text>
<text x="142.7" y="637" class="dl" text-anchor="middle">Mar/03</text>
<text x="306.6" y="637" class="dl" text-anchor="middle">Apr/07</text>
<text x="437.5" y="637" class="dl" text-anchor="middle">May/05</text>
<text x="568.8" y="637" class="dl" text-anchor="middle">Jun/02</text>
<text x="732.6" y="637" class="dl" text-anchor="middle">Jul/07</text>
<text x="862.5" y="637" class="dl" text-anchor="middle">Aug/04</text>
<rect x="30.5" y="50.5" width="20" height="20" fill="#c3dbf5" stroke="#86a9d6"/>
<rect x="37" y="53" width="1" height="13" fill="#4a3020"/>
<rect x="36" y="54.5" width="3.5" height="9.5" rx="1" fill="#f07a22"/>
<rect x="42" y="53.5" width="1" height="10" fill="#4a6a90"/>
<rect x="41" y="54.5" width="2.8" height="9" rx="1.2" fill="#6a98c8"/>
<rect x="33" y="56" width="1.5" height="9" fill="#d8c8c0" opacity="0.6"/>
<rect x="46" y="56" width="1.5" height="9" fill="#c8d4e0" opacity="0.6"/>
<rect x="57.7" y="53" width="1.6" height="13.5" fill="#000"/>
<rect x="56" y="56" width="2" height="1.6" fill="#000"/>
<rect x="59" y="61" width="2" height="1.6" fill="#000"/>
<rect x="63" y="53" width="1.6" height="13.5" fill="#000"/>
<rect x="61" y="58" width="2" height="1.6" fill="#000"/>
<rect x="64.5" y="63" width="2" height="1.6" fill="#000"/>
<polyline points="75,61.5 78.5,57.5 82.8,62 88.8,56" fill="none" stroke="#4a6078" stroke-width="1.4"/>
<rect x="94" y="52" width="1" height="18" fill="#a8a8a8"/>
<rect x="378.5" y="50.5" width="20" height="20" fill="#c3dbf5" stroke="#86a9d6"/>
<rect x="385" y="53" width="1.4" height="14.5" fill="#111"/>
<rect x="381" y="60.9" width="14" height="1.4" fill="#111"/>
<rect x="373" y="52" width="1" height="18" fill="#a8a8a8"/>
<rect x="404.6" y="54" width="1.6" height="13" fill="#111"/>
<rect x="410.8" y="54" width="1.6" height="13" fill="#111"/>
<rect x="402" y="56.8" width="13.8" height="1.6" fill="#111"/>
<rect x="402" y="62.8" width="13.8" height="1.6" fill="#111"/>
<rect x="429.3" y="55" width="1.8" height="1.8" fill="#222"/>
<rect x="429.5" y="59" width="1.8" height="6" fill="#111"/>
<rect x="428" y="59" width="2" height="1.1" fill="#111"/>
<rect x="427.6" y="64.2" width="5.4" height="1.3" fill="#111"/>
<polygon points="445,60 448.5,57 448.5,63" fill="#111"/>
<polygon points="457.5,60 454,57 454,63" fill="#111"/>
<rect x="450" y="61" width="1" height="1" fill="#555"/><rect x="452" y="61" width="1" height="1" fill="#555"/>
<text x="466.2" y="60.4" font-family="Liberation Sans" font-size="10" font-weight="bold" fill="#111" textLength="12.2" lengthAdjust="spacingAndGlyphs">vol</text>
<rect x="466" y="62" width="12.5" height="4" fill="#3b5a98"/>
<rect x="468" y="61" width="1.2" height="1.5" fill="#3b5a98"/><rect x="471" y="61" width="1.2" height="1.5" fill="#3b5a98"/><rect x="474.5" y="61" width="1.2" height="1.5" fill="#3b5a98"/>
<rect x="484" y="52" width="1" height="18" fill="#a8a8a8"/>
<rect x="494" y="54" width="1.6" height="13" fill="#111"/>
<rect x="492" y="55.5" width="2" height="1.5" fill="#111"/>
<line x1="496" y1="64" x2="506" y2="58.5" stroke="#111" stroke-width="1.2"/>
<rect x="514.8" y="54" width="1.6" height="13" fill="#111"/>
<rect x="513" y="55.5" width="2" height="1.5" fill="#111"/>
<rect x="516" y="62.5" width="2" height="1.5" fill="#111"/>
<line x1="518" y1="55.5" x2="527" y2="61" stroke="#111" stroke-width="1.1"/>
<rect x="536" y="54" width="1.6" height="13" fill="#111"/>
<rect x="544.3" y="54" width="1.6" height="13" fill="#111"/>
<rect x="534" y="59" width="14" height="1.3" fill="#111"/>
<rect x="534" y="56" width="2" height="1.4" fill="#111"/><rect x="542.5" y="56" width="2" height="1.4" fill="#111"/>
<rect x="537" y="62.5" width="2" height="1.4" fill="#111"/><rect x="545.5" y="62.5" width="2" height="1.4" fill="#111"/>
<line x1="555.5" y1="55" x2="563" y2="59" stroke="#222" stroke-width="1.1" stroke-dasharray="2 1"/>
<line x1="560.5" y1="65" x2="564" y2="59.5" stroke="#111" stroke-width="1.8"/>
<polygon points="565.5,57 559.5,60 564,62.5" fill="#111"/>
<rect x="574" y="52" width="1" height="18" fill="#a8a8a8"/>
<line x1="582.3" y1="62.2" x2="594.8" y2="55.2" stroke="#8a8a8a" stroke-width="1.5"/>
<line x1="583.5" y1="65.5" x2="595" y2="59" stroke="#8a8a8a" stroke-width="1.5"/>
<path d="M605.5,55.5 L614.5,64.5 M614.5,55.5 L605.5,64.5" stroke="#8c8c8c" stroke-width="3"/>
<path d="M625.5,53.5 L629.5,57.8 M629.5,53.5 L625.5,57.8" stroke="#8a8a8a" stroke-width="1.4"/>
<text x="628.5" y="66" font-family="Liberation Sans" font-size="9.5" fill="#8a8a8a">all</text>
<rect x="643" y="52" width="1" height="18" fill="#a8a8a8"/>
<rect x="655.2" y="55.2" width="5.6" height="6" fill="none" stroke="#111" stroke-width="1.6"/>
<rect x="656.5" y="57.8" width="3" height="1" fill="#111"/>
<rect x="652.8" y="59.8" width="10.4" height="4" fill="none" stroke="#111" stroke-width="1.6"/>
<path d="M674.5,54.5 L679,54.5 L680.5,56 L680.5,58 M674.5,54.5 L674.5,66 L680,66" fill="none" stroke="#666" stroke-width="1"/>
<circle cx="681" cy="61.5" r="3" fill="none" stroke="#111" stroke-width="1.4"/>
<line x1="683" y1="63.5" x2="686" y2="66.5" stroke="#111" stroke-width="1.6"/>
<rect x="691" y="52" width="1" height="18" fill="#a8a8a8"/>
<circle cx="706.6" cy="57.6" r="3.2" fill="none" stroke="#111" stroke-width="1.4"/>
<line x1="709" y1="60" x2="712.5" y2="63.5" stroke="#111" stroke-width="1.8"/>
<path d="M699.5,63.5 L704.5,63.5 M702,61 L702,66" stroke="#f0883a" stroke-width="1.4"/>
<circle cx="727.2" cy="57.9" r="3.2" fill="none" stroke="#111" stroke-width="1.4"/>
<line x1="729.5" y1="60.3" x2="733" y2="63.8" stroke="#111" stroke-width="1.8"/>
<rect x="721" y="63" width="5" height="1.2" fill="#222"/>
<rect x="741" y="54" width="14" height="1.8" fill="#555"/>
<rect x="741" y="65" width="14" height="1.8" fill="#555"/>
<polygon points="748,57 745.5,59.5 750.5,59.5" fill="#777"/>
<polygon points="748,63.5 745.5,61 750.5,61" fill="#777"/>
<rect x="760" y="52" width="1" height="18" fill="#a8a8a8"/>
<rect x="1066.5" y="50.5" width="18" height="18" fill="#bcd6f4" stroke="#7a98c4"/>
<rect x="1074" y="56" width="1" height="8" fill="#777"/>
<path d="M1075,56.5 L1081,63.5 L1081,56.5 L1075,63.5 Z" fill="#f0f0f8" stroke="#777" stroke-width="1"/>
<text x="34.2" y="45" font-family="Liberation Sans" font-size="13" font-weight="bold" fill="#161616" textLength="72.8" lengthAdjust="spacingAndGlyphs">Instruments</text>
<text x="117.2" y="45" font-family="Liberation Sans" font-size="13" font-weight="bold" fill="#161616" textLength="68.9" lengthAdjust="spacingAndGlyphs">Chart Type</text>
<text x="196.3" y="45" font-family="Liberation Sans" font-size="13" font-weight="bold" fill="#161616" textLength="71.4" lengthAdjust="spacingAndGlyphs">Time Scale</text>
<text x="278.6" y="45" font-family="Liberation Sans" font-size="13" font-weight="bold" fill="#161616" textLength="32.5" lengthAdjust="spacingAndGlyphs">View</text>
<text x="321.6" y="45" font-family="Liberation Sans" font-size="13" font-weight="bold" fill="#161616" textLength="24.9" lengthAdjust="spacingAndGlyphs">Edit</text>
<text x="357.2" y="45" font-family="Liberation Sans" font-size="13" font-weight="bold" fill="#161616" textLength="33.8" lengthAdjust="spacingAndGlyphs">Lines</text>
<text x="402.6" y="45" font-family="Liberation Sans" font-size="13" font-weight="bold" fill="#161616" textLength="46.6" lengthAdjust="spacingAndGlyphs">Studies</text>
<text x="458.3" y="45" font-family="Liberation Sans" font-size="13" font-weight="bold" fill="#161616" textLength="35.6" lengthAdjust="spacingAndGlyphs">Zoom</text>
<text x="504.9" y="45" font-family="Liberation Sans" font-size="13" font-weight="bold" fill="#161616" textLength="50.2" lengthAdjust="spacingAndGlyphs">Settings</text>
<text x="564.5" y="45" font-family="Liberation Sans" font-size="13" font-weight="bold" fill="#161616" textLength="29.6" lengthAdjust="spacingAndGlyphs">Help</text>
<rect x="309.5" y="50.5" width="20" height="20" fill="#c3dbf5" stroke="#86a9d6"/>
<text x="105.3" y="64.6" font-family="Liberation Sans" font-size="12.5" font-weight="normal" fill="#2a2a2a" textLength="8.1" lengthAdjust="spacingAndGlyphs">T</text>
<text x="128.4" y="64.6" font-family="Liberation Sans" font-size="12.5" font-weight="normal" fill="#2a2a2a" textLength="4.9" lengthAdjust="spacingAndGlyphs">1</text>
<text x="147.3" y="64.6" font-family="Liberation Sans" font-size="12.5" font-weight="normal" fill="#2a2a2a" textLength="7.4" lengthAdjust="spacingAndGlyphs">5</text>
<text x="165.5" y="64.6" font-family="Liberation Sans" font-size="12.5" font-weight="normal" fill="#2a2a2a" textLength="13.4" lengthAdjust="spacingAndGlyphs">10</text>
<text x="186.0" y="64.6" font-family="Liberation Sans" font-size="12.5" font-weight="normal" fill="#2a2a2a" textLength="13.7" lengthAdjust="spacingAndGlyphs">15</text>
<text x="207.4" y="64.6" font-family="Liberation Sans" font-size="12.5" font-weight="normal" fill="#2a2a2a" textLength="13.5" lengthAdjust="spacingAndGlyphs">30</text>
<text x="228.2" y="64.6" font-family="Liberation Sans" font-size="12.5" font-weight="normal" fill="#2a2a2a" textLength="12.7" lengthAdjust="spacingAndGlyphs">1H</text>
<text x="248.6" y="64.6" font-family="Liberation Sans" font-size="12.5" font-weight="normal" fill="#2a2a2a" textLength="13.8" lengthAdjust="spacingAndGlyphs">2H</text>
<text x="269.6" y="64.6" font-family="Liberation Sans" font-size="12.5" font-weight="normal" fill="#2a2a2a" textLength="14.8" lengthAdjust="spacingAndGlyphs">4H</text>
<text x="290.6" y="64.6" font-family="Liberation Sans" font-size="12.5" font-weight="normal" fill="#2a2a2a" textLength="13.8" lengthAdjust="spacingAndGlyphs">8H</text>
<text x="314.6" y="64.6" font-family="Liberation Sans" font-size="12.5" font-weight="normal" fill="#2a2a2a" textLength="8.3" lengthAdjust="spacingAndGlyphs">D</text>
<text x="334.6" y="64.6" font-family="Liberation Sans" font-size="12.5" font-weight="normal" fill="#2a2a2a" textLength="12.3" lengthAdjust="spacingAndGlyphs">W</text>
<text x="356.6" y="64.6" font-family="Liberation Sans" font-size="12.5" font-weight="normal" fill="#2a2a2a" textLength="10.8" lengthAdjust="spacingAndGlyphs">M</text>
<text x="12.3" y="81.7" font-family="Liberation Sans" font-size="10" font-weight="normal" fill="#111" textLength="43.4" lengthAdjust="spacingAndGlyphs">EUR/USD</text>
<text x="60.4" y="81.7" font-family="Liberation Sans" font-size="10" font-weight="normal" fill="#111" textLength="31.0" lengthAdjust="spacingAndGlyphs">, Daily,</text>
<text x="94.0" y="81.7" font-family="Liberation Sans" font-size="10" font-weight="normal" fill="#111" textLength="54.3" lengthAdjust="spacingAndGlyphs"># 140 / 300</text>
<rect x="8" y="29" width="1077" height="1" fill="#e2bb60"/>
<rect x="16" y="12" width="1" height="1" fill="#3a2408"/>
<rect x="24" y="12" width="1" height="1" fill="#3a2408"/>
<rect x="16" y="14" width="1" height="1" fill="#3a2408"/>
<rect x="18" y="14" width="1" height="1" fill="#3a2408"/>
<rect x="22" y="14" width="1" height="1" fill="#3a2408"/>
<rect x="24" y="14" width="1" height="1" fill="#3a2408"/>
<rect x="12" y="16" width="1" height="1" fill="#3a2408"/>
<rect x="14" y="16" width="1" height="1" fill="#3a2408"/>
<rect x="16" y="16" width="1" height="1" fill="#3a2408"/>
<rect x="18" y="16" width="1" height="1" fill="#3a2408"/>
<rect x="20" y="16" width="1" height="1" fill="#3a2408"/>
<rect x="22" y="16" width="1" height="1" fill="#3a2408"/>
<rect x="24" y="16" width="1" height="1" fill="#3a2408"/>
<rect x="10" y="18" width="1" height="1" fill="#3a2408"/>
<rect x="12" y="18" width="1" height="1" fill="#3a2408"/>
<rect x="14" y="18" width="1" height="1" fill="#3a2408"/>
<rect x="16" y="18" width="1" height="1" fill="#3a2408"/>
<rect x="18" y="18" width="1" height="1" fill="#3a2408"/>
<rect x="20" y="18" width="1" height="1" fill="#3a2408"/>
<rect x="22" y="18" width="1" height="1" fill="#3a2408"/>
<rect x="24" y="18" width="1" height="1" fill="#3a2408"/>
<rect x="10" y="20" width="1" height="1" fill="#3a2408"/>
<rect x="12" y="20" width="1" height="1" fill="#3a2408"/>
<rect x="14" y="20" width="1" height="1" fill="#3a2408"/>
<rect x="16" y="20" width="1" height="1" fill="#3a2408"/>
<rect x="18" y="20" width="1" height="1" fill="#3a2408"/>
<rect x="20" y="20" width="1" height="1" fill="#3a2408"/>
<rect x="22" y="20" width="1" height="1" fill="#3a2408"/>
<rect x="24" y="20" width="1" height="1" fill="#3a2408"/>
<text x="470.5" y="20.6" font-family="Liberation Sans" font-size="14.5" fill="#3e3420" textLength="152" lengthAdjust="spacingAndGlyphs">NetDania FinanceChart</text>
<rect x="997" y="12" width="8" height="2" fill="#111"/>
<rect x="1015" y="0" width="25" height="21" fill="#2b63b6"/>
<rect x="1023.5" y="7.5" width="9" height="7" fill="none" stroke="#fff" stroke-width="1.3"/>
<rect x="1023.5" y="7.5" width="9" height="2" fill="#fff"/>
<rect x="1040" y="0" width="46" height="21" fill="#d9453a"/>
<path d="M1059.5,7.5 L1068.5,15.5 M1068.5,7.5 L1059.5,15.5" stroke="#fff" stroke-width="1.4"/>
<rect x="13" y="654" width="11" height="11" fill="#3b6aa8"/>
<rect x="26" y="650" width="1" height="19" fill="#b8b8b8"/>
<rect x="30.5" y="649.5" width="149" height="20" fill="#ffffff" stroke="#b4b8c0"/>
<circle cx="39.5" cy="658.5" r="3.3" fill="none" stroke="#444" stroke-width="1.2"/>
<line x1="37" y1="661" x2="33.8" y2="664.5" stroke="#444" stroke-width="1.5"/>
<rect x="40" y="665" width="1" height="1" fill="#555"/><rect x="42" y="665" width="1" height="1" fill="#555"/><rect x="44" y="665" width="1" height="1" fill="#555"/>
<text x="51.5" y="664.5" font-family="Liberation Sans" font-size="12" fill="#777" textLength="104.5" lengthAdjust="spacingAndGlyphs">Search for instrument</text>
<rect x="198" y="651" width="1" height="18" fill="#777"/>
<text x="202.2" y="664.7" font-family="Liberation Sans" font-size="12.5" font-weight="bold" fill="#161616" textLength="145.6" lengthAdjust="spacingAndGlyphs">17 Aug 2014 20:00:00 EDT</text>
</svg>
</body></html>
